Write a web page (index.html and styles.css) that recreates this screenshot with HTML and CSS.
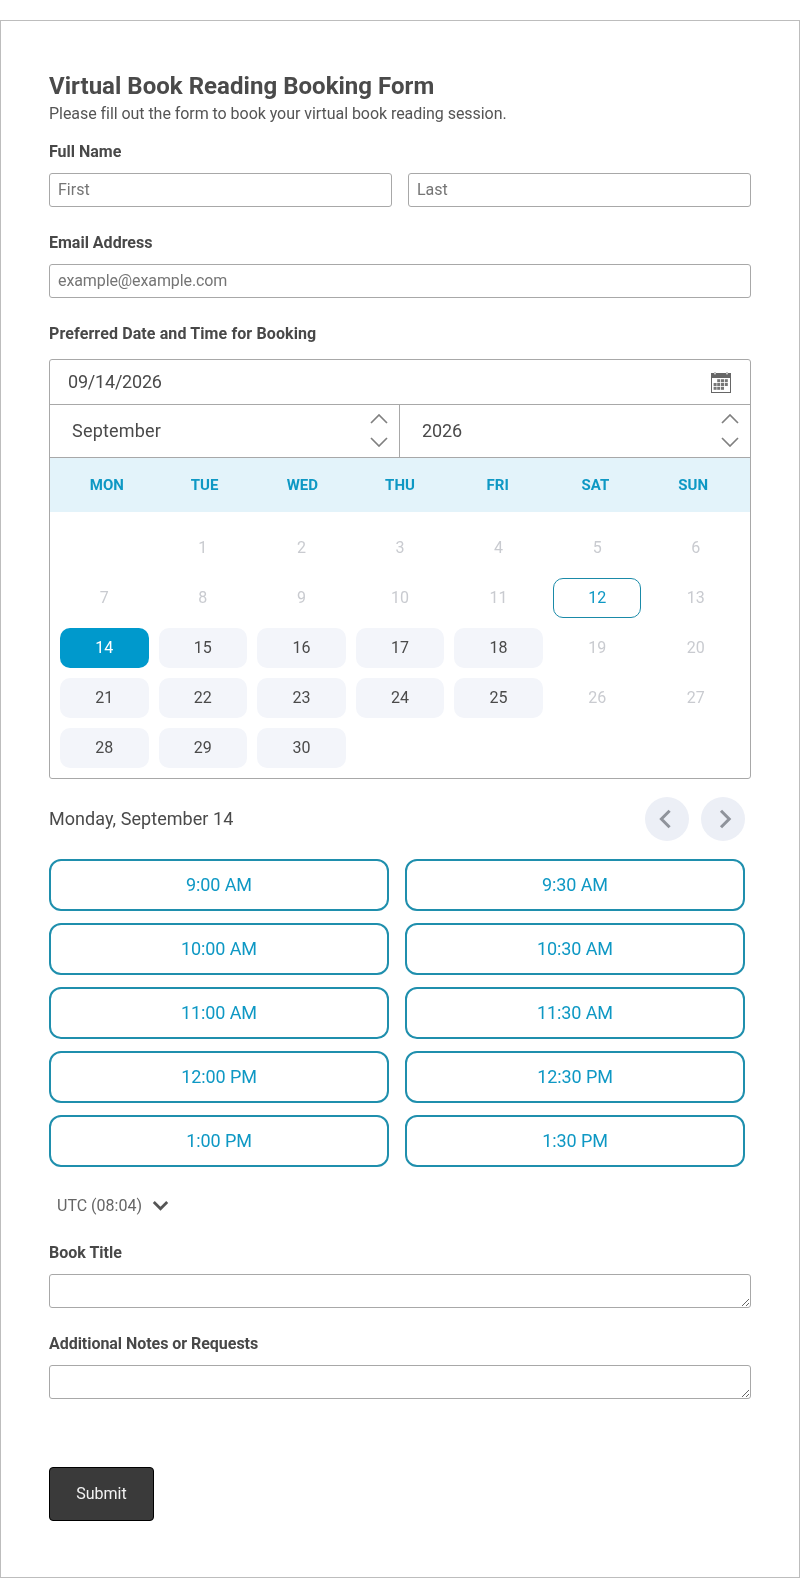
FILE: index.html
```html
<!DOCTYPE html>
<html lang="en">
<head>
<meta charset="utf-8">
<title>Virtual Book Reading Booking Form</title>
<link rel="stylesheet" href="styles.css">
</head>
<body>
<form class="card">
  <h1 class="title">Virtual Book Reading Booking Form</h1>
  <p class="subtitle">Please fill out the form to book your virtual book reading session.</p>

  <div class="field field-name">
    <label class="label">Full Name</label>
    <div class="name-row">
      <input class="input" type="text" placeholder="First">
      <input class="input" type="text" placeholder="Last">
    </div>
  </div>

  <div class="field">
    <label class="label">Email Address</label>
    <input class="input input-email" type="text" placeholder="example@example.com">
  </div>

  <div class="field">
    <label class="label label-wide">Preferred Date and Time for Booking</label>
    <div class="calendar">
      <div class="date-row">
        <span class="date-text">09/14/2026</span>
        <svg class="cal-icon" width="20" height="21" viewBox="0 0 20 21">
          <path fill="#666" d="M0 1h3V0h2v1h10V0h2v1h3v20H0z"/>
          <rect x="3.2" y="0" width="1.6" height="2.4" fill="#ddd"/>
          <rect x="15.2" y="0" width="1.6" height="2.4" fill="#ddd"/>
          <rect x="1" y="6" width="18" height="14" fill="#fff"/>
          <g fill="#777">
            <rect x="6.2" y="7.2" width="3" height="3"/><rect x="10" y="7.2" width="3" height="3"/><rect x="13.8" y="7.2" width="3" height="3"/>
            <rect x="2.6" y="11" width="3" height="3"/><rect x="6.2" y="11" width="3" height="3"/><rect x="10" y="11" width="3" height="3"/><rect x="13.8" y="11" width="3" height="3"/>
            <rect x="2.6" y="14.8" width="3" height="3"/><rect x="6.2" y="14.8" width="3" height="3"/><rect x="10" y="14.8" width="3" height="3"/>
          </g>
        </svg>
      </div>
      <div class="month-row">
        <div class="spin spin-month">
          <span class="spin-text">September</span>
          <span class="arrows">
            <svg width="18" height="10" viewBox="0 0 18 10"><path d="M1 9l8-8 8 8" fill="none" stroke="#808080" stroke-width="1.7"/></svg>
            <svg width="18" height="10" viewBox="0 0 18 10"><path d="M1 1l8 8 8-8" fill="none" stroke="#808080" stroke-width="1.7"/></svg>
          </span>
        </div>
        <div class="spin spin-year">
          <span class="year-text">2026</span>
          <span class="arrows">
            <svg width="18" height="10" viewBox="0 0 18 10"><path d="M1 9l8-8 8 8" fill="none" stroke="#808080" stroke-width="1.7"/></svg>
            <svg width="18" height="10" viewBox="0 0 18 10"><path d="M1 1l8 8 8-8" fill="none" stroke="#808080" stroke-width="1.7"/></svg>
          </span>
        </div>
      </div>
      <div class="weekdays">
        <span>MON</span><span>TUE</span><span>WED</span><span>THU</span><span>FRI</span><span>SAT</span><span>SUN</span>
      </div>
      <div class="days">
        <span class="day"></span>
        <span class="day off">1</span><span class="day off">2</span><span class="day off">3</span><span class="day off">4</span><span class="day off">5</span><span class="day off">6</span>
        <span class="day off">7</span><span class="day off">8</span><span class="day off">9</span><span class="day off">10</span><span class="day off">11</span><span class="day today">12</span><span class="day off">13</span>
        <span class="day selected">14</span><span class="day open">15</span><span class="day open">16</span><span class="day open">17</span><span class="day open">18</span><span class="day off">19</span><span class="day off">20</span>
        <span class="day open">21</span><span class="day open">22</span><span class="day open">23</span><span class="day open">24</span><span class="day open">25</span><span class="day off">26</span><span class="day off">27</span>
        <span class="day open">28</span><span class="day open">29</span><span class="day open">30</span>
      </div>
    </div>

    <div class="slot-head">
      <span class="slot-date">Monday, September 14</span>
      <div class="nav">
        <button type="button" class="nav-btn"><svg width="18" height="22" viewBox="0 0 18 22"><path d="M11.6 2.8L3.4 11l8.2 8.2" fill="none" stroke="#8f939b" stroke-width="3"/></svg></button>
        <button type="button" class="nav-btn"><svg width="18" height="22" viewBox="0 0 18 22"><path d="M7 2.8l8.2 8.2L7 19.2" fill="none" stroke="#8f939b" stroke-width="3"/></svg></button>
      </div>
    </div>

    <div class="slots">
      <button type="button" class="slot">9:00 AM</button>
      <button type="button" class="slot">9:30 AM</button>
      <button type="button" class="slot">10:00 AM</button>
      <button type="button" class="slot">10:30 AM</button>
      <button type="button" class="slot">11:00 AM</button>
      <button type="button" class="slot">11:30 AM</button>
      <button type="button" class="slot">12:00 PM</button>
      <button type="button" class="slot">12:30 PM</button>
      <button type="button" class="slot">1:00 PM</button>
      <button type="button" class="slot">1:30 PM</button>
    </div>

    <div class="tz">
      <span>UTC (08:04)</span>
      <svg width="17" height="11" viewBox="0 0 17 11"><path d="M1.8 2l6.7 6.7L15.2 2" fill="none" stroke="#555" stroke-width="2.8"/></svg>
    </div>
  </div>

  <div class="field field-book">
    <label class="label">Book Title</label>
    <textarea class="input area"></textarea>
  </div>

  <div class="field">
    <label class="label label-notes">Additional Notes or Requests</label>
    <textarea class="input area"></textarea>
  </div>

  <button type="button" class="submit">Submit</button>
</form>
</body>
</html>
```

FILE: styles.css
```css
* { box-sizing: border-box; }
html, body { margin: 0; padding: 0; background: #fff; }
body {
  padding-top: 20px;
  font-family: Roboto, "Liberation Sans", sans-serif;
  color: #4a4a4a;
}
.card {
  width: 800px;
  height: 1558px;
  border: 1px solid #bdbdbd;
  padding: 49px 48px 0;
  will-change: transform;
}
.title {
  margin: 0;
  font-size: 24px;
  line-height: 32px;
  font-weight: 700;
  color: #4a4a4a;
  height: 32px;
  letter-spacing: 0.03px;
}
.subtitle {
  margin: 0;
  font-size: 16px;
  line-height: 24px;
  color: #555;
  height: 24px;
  letter-spacing: -0.05px;
}
.field { margin-top: 25px; display: flex; flex-direction: column; }
.field-name { margin-top: 15px; }
.field-book { margin-top: 21px; }
.label {
  font-size: 16px;
  font-weight: 700;
  line-height: 22px;
  height: 22px;
  margin-bottom: 10px;
  color: #484848;
}
.label-wide { letter-spacing: 0.11px; }
.label-notes { letter-spacing: -0.04px; }
.name-row { display: flex; gap: 16px; }
.input {
  display: block;
  width: 100%;
  height: 34px;
  border: 1px solid #a8a8a8;
  border-radius: 3px;
  padding: 0 8px 2px;
  font: 16px Roboto, sans-serif;
  color: #4a4a4a;
  background: #fff;
  outline: none;
}
.input::placeholder { color: #757575; opacity: 1; }
.input-email::placeholder { letter-spacing: -0.1px; }
.area { padding: 4px 8px; resize: vertical; margin: 0; }

.calendar {
  border: 1px solid #a8a8a8;
  border-radius: 3px;
  margin-top: 4px;
  overflow: hidden;
}
.date-row {
  height: 45px;
  display: flex;
  align-items: center;
  justify-content: space-between;
  padding: 0 19px 0 18px;
  border-bottom: 1px solid #a8a8a8;
  font-size: 18px;
  color: #4a4a4a;
}
.date-text { letter-spacing: -0.2px; padding-bottom: 2px; }
.cal-icon { display: block; }
.month-row { display: flex; height: 53px; border-bottom: 1px solid #a8a8a8; }
.spin {
  display: flex;
  align-items: center;
  justify-content: space-between;
  font-size: 18px;
  color: #4a4a4a;
  padding: 0 11px 2px 22px;
}
.spin-month { width: 350px; border-right: 1px solid #a8a8a8; }
.spin-year { flex: 1; }
.spin-text { letter-spacing: 0.2px; }
.year-text { letter-spacing: -0.1px; }
.arrows { display: flex; flex-direction: column; gap: 13px; }
.arrows svg { display: block; }
.weekdays {
  height: 54px;
  background: #e3f3fa;
  display: grid;
  grid-template-columns: repeat(7, 1fr);
  padding: 0 8px;
  align-items: center;
  justify-items: center;
  font-size: 15px;
  font-weight: 700;
  color: #0e98c4;
}
.days {
  display: grid;
  grid-template-columns: repeat(7, 1fr);
  column-gap: 10px;
  grid-auto-rows: 40px;
  row-gap: 10px;
  padding: 16px 10px 10px;
}
.day {
  display: flex;
  align-items: center;
  justify-content: center;
  font-size: 16px;
  border-radius: 10px;
  color: #4a4a4a;
  padding-bottom: 2px;
}
.off { color: #c9cbd0; }
.open { background: #f3f5fa; }
.selected { background: #0099cc; color: #fff; }
.today { border: 1px solid #1a8aa8; color: #0e98c4; }

.slot-head {
  display: flex;
  align-items: center;
  justify-content: space-between;
  margin-top: 18px;
  height: 44px;
  width: 696px;
}
.slot-date { font-size: 18px; color: #4a4a4a; letter-spacing: 0.05px; padding-bottom: 2px; }
.nav { display: flex; gap: 12px; }
.nav-btn {
  width: 44px;
  height: 44px;
  border: 0;
  padding: 0;
  border-radius: 50%;
  background: #eceff6;
  display: flex;
  align-items: center;
  justify-content: center;
}
.slots {
  margin-top: 18px;
  width: 696px;
  display: grid;
  grid-template-columns: 1fr 1fr;
  column-gap: 16px;
  row-gap: 12px;
  grid-auto-rows: 52px;
}
.slot {
  border: 2px solid #1f8fad;
  border-radius: 12px;
  background: #fff;
  color: #0e98c4;
  font: 18px Roboto, sans-serif;
  letter-spacing: -0.1px;
  padding: 0 0 2px;
}
.tz {
  display: flex;
  align-items: center;
  gap: 10px;
  margin-top: 22px;
  padding-left: 8px;
  height: 32px;
  font-size: 16px;
  color: #666;
}
.submit {
  display: block;
  margin-top: 68px;
  width: 105px;
  height: 54px;
  background: #3a3a3a;
  color: #f2f2f2;
  border: 1px solid #000;
  border-radius: 4px;
  font: 16px Roboto, sans-serif;
  padding: 0 0 2px;
}
```
